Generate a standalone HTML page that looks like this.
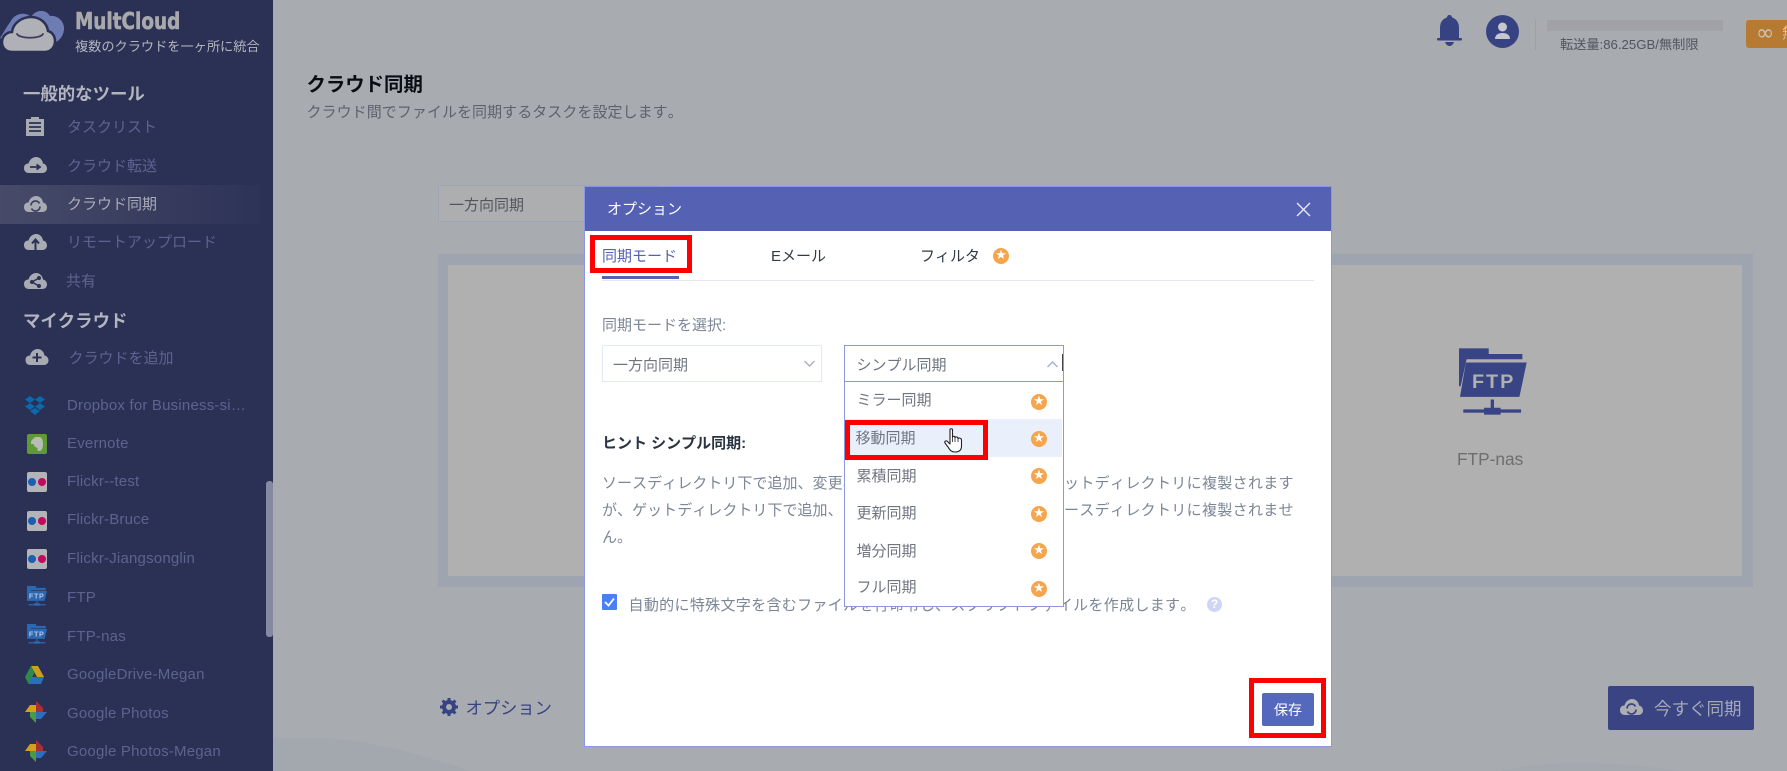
<!DOCTYPE html>
<html lang="ja">
<head>
<meta charset="utf-8">
<title>クラウド同期</title>
<style>
html,body{margin:0;padding:0;width:1787px;height:771px;overflow:hidden;background:#a8abb0;}
body{position:relative;font-family:"Liberation Sans","Noto Sans CJK JP",sans-serif;font-size:15px;font-kerning:none;}
.a{position:absolute;}
.t{position:absolute;white-space:nowrap;line-height:20px;height:20px;margin-top:-9px;}
#side{position:absolute;left:0;top:0;width:273px;height:771px;background:#2b3155;overflow:hidden;}
#side .n{color:#5c638f;}
#side .l{letter-spacing:.2px;}
#side .h{color:#b4b6bf;font-weight:bold;font-size:17.4px;}
svg{position:absolute;display:block;overflow:visible;}
.star{position:absolute;width:16px;height:16px;border-radius:50%;background:#f6a54c;}
.star:after{content:"★";position:absolute;left:0;top:0;width:16px;text-align:center;line-height:16px;color:#fff;font-size:13px;font-family:"DejaVu Sans",sans-serif;}
.red{position:absolute;border:5px solid #fe0000;box-sizing:border-box;}
.dd{color:#6f7580;}
.p{color:#7b8696;}
</style>
</head>
<body>
<!-- main background waves -->
<svg style="left:273px;top:730px" width="220" height="41"><path d="M0 9C50 5 100 8 197 41H0Z" fill="#a3a7ae"/></svg>
<svg style="left:1500px;top:755px" width="190" height="16"><path d="M0 16C50 6 100 5 180 16Z" fill="#a4a8af"/></svg>

<!-- sidebar -->
<div id="side">
  <svg style="left:0;top:8px" width="66" height="46" viewBox="0 0 66 46">
    <path d="M0 30C4 24 7 18 11 13C14 6 25 3 31 9C36 1 46 1 50 8C58 7 65 14 64 22C63 28 60 32 56 34H10Z" fill="#6e7cb4"/>
    <path d="M12 44C5 44 2 39 2 34C2 28 7 24 12 24C13 15 22 9 31 9C40 9 47 15 48 23C52 24 55 28 55 33C55 39 51 44 45 44Z" fill="#b0b1b6" stroke="#2b3155" stroke-width="2.500"/>
    <path d="M17 26C20 31 40 31 43 26" fill="none" stroke="#3a3f5c" stroke-width="1.800" stroke-linecap="round"/>
  </svg>
  <div class="t" style="left:75px;top:21px;font-size:23px;font-weight:bold;color:#a9a9ac;font-family:'DejaVu Sans',sans-serif;transform:scaleX(.8);transform-origin:left center;-webkit-text-stroke:.6px #a9a9ac">MultCloud</div>
  <div class="t" style="left:75px;top:46px;font-size:13.2px;color:#b3b5be">複数のクラウドを一ヶ所に統合</div>

  <div class="t h" style="left:23px;top:92.500px">一般的なツール</div>

  <svg style="left:26px;top:116px" width="18" height="21" viewBox="0 0 18 21"><path d="M0 3H5V1H13V3H18V20H0Z" fill="#a9abb3"/><path d="M3 7H15M3 11H15M3 15H15" stroke="#2b3155" stroke-width="1.800"/></svg>
  <div class="t n" style="left:67px;top:127px">タスクリスト</div>

  <svg style="left:24px;top:157px" width="23" height="17" viewBox="0 0 23 17"><path d="M5 16C1 16 0 13 0 11C0 8 2 6.500 4.500 6.500C5.500 2.500 9 0 12 0C16 0 18.500 3 19 6.500C21.500 7 23 9 23 11.500C23 14 21 16 18.500 16Z" fill="#a9abb3"/><path d="M6 10H15M12.500 7.500L16 10L12.500 12.500" fill="none" stroke="#2b3155" stroke-width="1.800"/></svg>
  <div class="t n" style="left:67px;top:166px">クラウド転送</div>

  <div class="a" style="left:0;top:185px;width:260px;height:39px;background:linear-gradient(90deg,#474b69,#2d3357)"></div>
  <svg style="left:24px;top:196px" width="23" height="17" viewBox="0 0 23 17"><path d="M5 16C1 16 0 13 0 11C0 8 2 6.500 4.500 6.500C5.500 2.500 9 0 12 0C16 0 18.500 3 19 6.500C21.500 7 23 9 23 11.500C23 14 21 16 18.500 16Z" fill="#a9abb3"/><path d="M7 9.500A4.500 4.500 0 0 1 15.500 7.500M16 10.500A4.500 4.500 0 0 1 7.500 12.500" fill="none" stroke="#3e4263" stroke-width="1.800"/></svg>
  <div class="t" style="left:67px;top:204px;color:#a9abb8">クラウド同期</div>

  <svg style="left:24px;top:234px" width="23" height="17" viewBox="0 0 23 17"><path d="M5 16C1 16 0 13 0 11C0 8 2 6.500 4.500 6.500C5.500 2.500 9 0 12 0C16 0 18.500 3 19 6.500C21.500 7 23 9 23 11.500C23 14 21 16 18.500 16Z" fill="#a9abb3"/><path d="M11.500 16V7M8 9.500L11.500 5.500L15 9.500" fill="none" stroke="#2b3155" stroke-width="2"/></svg>
  <div class="t n" style="left:67px;top:242px">リモートアップロード</div>

  <svg style="left:24px;top:273px" width="23" height="17" viewBox="0 0 23 17"><path d="M5 16C1 16 0 13 0 11C0 8 2 6.500 4.500 6.500C5.500 2.500 9 0 12 0C16 0 18.500 3 19 6.500C21.500 7 23 9 23 11.500C23 14 21 16 18.500 16Z" fill="#a9abb3"/><path d="M15 5L8 9L15 13" fill="none" stroke="#2b3155" stroke-width="1.500"/><circle cx="15" cy="5" r="2" fill="#2b3155"/><circle cx="8" cy="9" r="2" fill="#2b3155"/><circle cx="15" cy="13" r="2" fill="#2b3155"/></svg>
  <div class="t n" style="left:66px;top:281px">共有</div>

  <div class="t h" style="left:23px;top:319.500px">マイクラウド</div>

  <svg style="left:25px;top:349px" width="24" height="17" viewBox="0 0 23 17"><path d="M5 16C1 16 0 13 0 11C0 8 2 6.500 4.500 6.500C5.500 2.500 9 0 12 0C16 0 18.500 3 19 6.500C21.500 7 23 9 23 11.500C23 14 21 16 18.500 16Z" fill="#a9abb3"/><path d="M11.500 4V13M7 8.500H16" stroke="#2b3155" stroke-width="2"/></svg>
  <div class="t n" style="left:68.500px;top:358px">クラウドを追加</div>

  <!-- cloud list -->
  <svg style="left:25px;top:396px" width="20" height="19" viewBox="0 0 20 19"><path d="M5 0L10 3.500L5 7L0 3.500ZM15 0L20 3.500L15 7L10 3.500ZM5 7L10 10.500L5 14L0 10.500ZM15 7L20 10.500L15 14L10 10.500ZM5 15L10 12L15 15L10 19Z" fill="#0b69ad"/></svg>
  <div class="t n l" style="left:67px;top:405px">Dropbox for Business-si…</div>

  <div class="a" style="left:27px;top:434px;width:20px;height:20px;border-radius:2px;background:#5f9a37"></div>
  <svg style="left:29px;top:436px" width="16" height="16" viewBox="0 0 16 16"><path d="M3 4L6 1H10C13 1 14 4 14 8C14 12 13 15 10 15C8 15 8 13 9 12C7 12 5 10 4.500 8H2C2 6 2 5 3 4Z" fill="#b7bcb5"/></svg>
  <div class="t n l" style="left:67px;top:443px">Evernote</div>

  <div class="a" style="left:27px;top:472px;width:20px;height:20px;border-radius:2px;background:#b3b4b8"></div>
  <div class="a" style="left:28px;top:478px;width:8px;height:8px;border-radius:50%;background:#1b5fb0"></div>
  <div class="a" style="left:38px;top:478px;width:8px;height:8px;border-radius:50%;background:#c2085f"></div>
  <div class="t n l" style="left:67px;top:481px">Flickr--test</div>

  <div class="a" style="left:27px;top:511px;width:20px;height:20px;border-radius:2px;background:#b3b4b8"></div>
  <div class="a" style="left:28px;top:517px;width:8px;height:8px;border-radius:50%;background:#1b5fb0"></div>
  <div class="a" style="left:38px;top:517px;width:8px;height:8px;border-radius:50%;background:#c2085f"></div>
  <div class="t n l" style="left:67px;top:519px">Flickr-Bruce</div>

  <div class="a" style="left:27px;top:549px;width:20px;height:20px;border-radius:2px;background:#b3b4b8"></div>
  <div class="a" style="left:28px;top:555px;width:8px;height:8px;border-radius:50%;background:#1b5fb0"></div>
  <div class="a" style="left:38px;top:555px;width:8px;height:8px;border-radius:50%;background:#c2085f"></div>
  <div class="t n l" style="left:67px;top:558px">Flickr-Jiangsonglin</div>

  <svg style="left:27px;top:586px" width="20" height="20" viewBox="0 0 66 66"><path d="M0 0H30V6H62V14H14L0 50Z" fill="#2a68b3"/><path d="M7 16H66L58 49H0Z" fill="#2a68b3"/><text x="32" y="41" font-family="Liberation Sans" font-weight="bold" font-size="24" fill="#b6c4dc" text-anchor="middle" letter-spacing="2">FTP</text><path d="M33 50V58M5 62H61" stroke="#2a68b3" stroke-width="4"/><rect x="24" y="57" width="18" height="8" fill="#2a68b3"/></svg>
  <div class="t n l" style="left:67px;top:597px">FTP</div>

  <svg style="left:27px;top:624px" width="20" height="20" viewBox="0 0 66 66"><path d="M0 0H30V6H62V14H14L0 50Z" fill="#2a68b3"/><path d="M7 16H66L58 49H0Z" fill="#2a68b3"/><text x="32" y="41" font-family="Liberation Sans" font-weight="bold" font-size="24" fill="#b6c4dc" text-anchor="middle" letter-spacing="2">FTP</text><path d="M33 50V58M5 62H61" stroke="#2a68b3" stroke-width="4"/><rect x="24" y="57" width="18" height="8" fill="#2a68b3"/></svg>
  <div class="t n l" style="left:67px;top:636px">FTP-nas</div>

  <svg style="left:25px;top:666px" width="19" height="18" viewBox="0 0 19 18"><path d="M6 0H13L19 11H12Z" fill="#c9a11d"/><path d="M6 0L0 11L3.500 18L9.500 7Z" fill="#2c8a4a"/><path d="M3.500 18H16L19 11H7Z" fill="#2a6fbb"/></svg>
  <div class="t n l" style="left:67px;top:674px">GoogleDrive-Megan</div>

  <svg style="left:25px;top:701px" width="22" height="22" viewBox="0 0 22 22"><path d="M11 11V0L18 7V11Z" fill="#a9302f"/><path d="M11 11H22L16 18H11Z" fill="#2f6dbd"/><path d="M11 11V22L5 16V11Z" fill="#4d9a45"/><path d="M11 11H0L5 4H11Z" fill="#d3a019"/></svg>
  <div class="t n l" style="left:67px;top:713px">Google Photos</div>

  <svg style="left:25px;top:740px" width="22" height="22" viewBox="0 0 22 22"><path d="M11 11V0L18 7V11Z" fill="#a9302f"/><path d="M11 11H22L16 18H11Z" fill="#2f6dbd"/><path d="M11 11V22L5 16V11Z" fill="#4d9a45"/><path d="M11 11H0L5 4H11Z" fill="#d3a019"/></svg>
  <div class="t n l" style="left:67px;top:751px">Google Photos-Megan</div>

  <div class="a" style="left:266px;top:481px;width:7px;height:156px;border-radius:3px;background:#858aa1"></div>
</div>

<!-- top right -->
<svg style="left:1437px;top:15px" width="25" height="31" viewBox="0 0 25 31"><path d="M12.500 0C14 0 15 1 15 2.500C20 4 22 8 22 13V24H3V13C3 8 5 4 10 2.500C10 1 11 0 12.500 0Z" fill="#374283"/><rect x="0" y="23" width="25" height="2.500" rx="1" fill="#374283"/><path d="M8 27H17C16 30 14 31 12.500 31C11 31 9 30 8 27Z" fill="#374283"/></svg>
<div class="a" style="left:1486px;top:15px;width:33px;height:33px;border-radius:50%;background:#374283"></div>
<svg style="left:1486px;top:15px" width="33" height="33" viewBox="0 0 33 33"><circle cx="16.500" cy="12" r="4.500" fill="#c5c7cd"/><path d="M9 24C9 20 12 18 16.500 18C21 18 24 20 24 24Z" fill="#c5c7cd"/></svg>
<div class="a" style="left:1535px;top:20px;width:1px;height:30px;background:#9da0a5"></div>
<div class="a" style="left:1547px;top:20px;width:176px;height:11px;background:#a0a2a7"></div>
<div class="t" style="left:1560px;top:44px;font-size:13.2px;color:#50545c">転送量:86.25GB/無制限</div>
<div class="a" style="left:1746px;top:20px;width:41px;height:28px;background:#b67a32;border-radius:3px 0 0 3px;overflow:hidden;color:#c9c4b8">
  <div class="a" style="left:10px;top:3px;font-size:22px;line-height:22px;font-family:'DejaVu Sans',sans-serif">∞</div>
  <div class="a" style="left:36px;top:5px;font-size:15px;line-height:18px">無</div>
</div>

<!-- title -->
<div class="t" style="left:306.500px;top:83.500px;font-size:19.400px;font-weight:bold;color:#0a0e14">クラウド同期</div>
<div class="t" style="left:306.500px;top:112px;font-size:15px;color:#5d626c;letter-spacing:.05px">クラウド間でファイルを同期するタスクを設定します。</div>

<!-- behind select -->
<div class="a" style="left:438px;top:185px;width:220px;height:37px;background:#acaeb0;border:1px solid #9ea4b3;box-sizing:border-box"></div>
<div class="t" style="left:449px;top:205px;color:#52565c">一方向同期</div>

<!-- panel -->
<div class="a" style="left:438px;top:254px;width:1315px;height:333px;background:#9ea5b0"></div>
<div class="a" style="left:448px;top:265px;width:1294px;height:311px;background:#b0b0b0"></div>
<svg style="left:1459px;top:348px" width="68" height="68" viewBox="57 25 206 204"><path d="M57 25H147V42H249V58H80L62 140H57Z" fill="#384484"/><path d="M78 68H262L240 172H60Z" fill="#384484"/><text x="162" y="145" font-family="Liberation Sans" font-weight="bold" font-size="60" fill="#b0b0b0" text-anchor="middle" letter-spacing="6">FTP</text><rect x="153" y="180" width="10" height="28" fill="#384484"/><rect x="70" y="210" width="175" height="10" fill="#384484"/><rect x="133" y="205" width="50" height="21" fill="#384484"/></svg>
<div class="t" style="left:1457px;top:458px;font-size:17.300px;color:#6e6e6e;width:66px;text-align:center">FTP-nas</div>

<!-- options / sync now -->
<svg style="left:440px;top:698px" width="18" height="18" viewBox="0 0 18 18"><circle cx="9" cy="9" r="5" fill="none" stroke="#374283" stroke-width="4"/><path d="M9 0V18M0 9H18M2.600 2.600L15.400 15.400M15.400 2.600L2.600 15.400" stroke="#374283" stroke-width="3"/><circle cx="9" cy="9" r="3" fill="#a8abb0"/></svg>
<div class="t" style="left:465.500px;top:707px;font-size:17.300px;color:#374283">オプション</div>

<div class="a" style="left:1608px;top:686px;width:146px;height:44px;background:#3a4483;border-radius:2px"></div>
<svg style="left:1620px;top:699px" width="23" height="17" viewBox="0 0 23 17"><path d="M5 16C1 16 0 13 0 11C0 8 2 6.500 4.500 6.500C5.500 2.500 9 0 12 0C16 0 18.500 3 19 6.500C21.500 7 23 9 23 11.500C23 14 21 16 18.500 16Z" fill="#adaeb4"/><path d="M7 9.500A4.500 4.500 0 0 1 15.500 7.500M16 10.500A4.500 4.500 0 0 1 7.500 12.500" fill="none" stroke="#3a4483" stroke-width="1.800"/></svg>
<div class="t" style="left:1654px;top:708px;font-size:17.500px;color:#a6a9b5">今すぐ同期</div>

<!-- modal -->
<div class="a" style="left:584px;top:186px;width:748px;height:561px;background:#fff;border:1px solid #8a96e6;box-sizing:border-box"></div>
<div class="a" style="left:585px;top:187px;width:746px;height:44px;background:#5561b2"></div>
<div class="t" style="left:607px;top:208.500px;font-size:15px;color:#fff">オプション</div>
<svg style="left:1296px;top:202px" width="15" height="15" viewBox="0 0 15 15"><path d="M1 1L14 14M14 1L1 14" stroke="#e8e9f5" stroke-width="1.400"/></svg>

<div class="t" style="left:602px;top:255.500px;color:#5561b2">同期モード</div>
<div class="t" style="left:771px;top:255.500px;color:#333a45">Eメール</div>
<div class="t" style="left:920px;top:255.500px;color:#333a45">フィルタ</div>
<div class="star" style="left:993px;top:248px"></div>
<div class="a" style="left:602px;top:280px;width:712px;height:1px;background:#e4e7f2"></div>
<div class="a" style="left:602px;top:276px;width:77px;height:3px;background:#5561b2"></div>

<div class="t p" style="left:602px;top:324.500px">同期モードを選択:</div>
<div class="a" style="left:602px;top:345px;width:220px;height:37px;border:1px solid #e3e8f5;box-sizing:border-box"></div>
<div class="t dd" style="left:613px;top:365px">一方向同期</div>
<svg style="left:804px;top:360px" width="11" height="7" viewBox="0 0 11 7"><path d="M.5 1L5.500 6L10.500 1" fill="none" stroke="#aeb0b8" stroke-width="1.400"/></svg>

<!-- hint text -->
<div class="t" style="left:602px;top:443px;font-weight:bold;color:#2a3442">ヒント シンプル同期:</div>
<div class="t p" style="left:602px;top:483px;letter-spacing:.04px">ソースディレクトリ下で追加、変更、</div>
<div class="t p" style="left:1064px;top:483px;letter-spacing:.33px">ットディレクトリに複製されます</div>
<div class="t p" style="left:602px;top:510px;letter-spacing:.04px">が、ゲットディレクトリ下で追加、</div>
<div class="t p" style="left:1064px;top:510px;letter-spacing:.33px">ースディレクトリに複製されませ</div>
<div class="t p" style="left:602px;top:537px">ん。</div>

<div class="a" style="left:602px;top:594px;width:15px;height:16px;background:#4a80f5;border-radius:1px"></div>
<svg style="left:602px;top:594px" width="15" height="16" viewBox="0 0 15 16"><path d="M3 8L6.500 11.500L12 4.500" fill="none" stroke="#fff" stroke-width="1.800"/></svg>
<div class="t p" style="left:628.500px;top:605px;letter-spacing:.33px">自動的に特殊文字を含むファイルを行命令し、スクリプトファイルを作成します。</div>
<div class="a" style="left:1207px;top:597px;width:15px;height:15px;border-radius:50%;background:#cfd6f5;color:#fff;font-size:12px;line-height:15px;text-align:center;font-weight:bold">?</div>

<!-- select 2 + dropdown -->
<div class="a" style="left:844px;top:345px;width:220px;height:262px;background:#fff;border:1px solid #8b98e0;box-sizing:border-box"></div>
<div class="a" style="left:845px;top:381px;width:218px;height:1px;background:#8b98e0"></div>
<div class="t dd" style="left:856.500px;top:365px">シンプル同期</div>
<svg style="left:1047px;top:361px" width="11" height="7" viewBox="0 0 11 7"><path d="M.5 6L5.500 1L10.500 6" fill="none" stroke="#a7b0e0" stroke-width="1.500"/></svg>
<div class="a" style="left:1062px;top:354px;width:1px;height:17px;background:#444"></div>
<div class="a" style="left:845px;top:419px;width:217px;height:38px;background:#e9f0fc"></div>
<div class="t dd" style="left:856.500px;top:400px">ミラー同期</div>
<div class="t dd" style="left:855.500px;top:438px">移動同期</div>
<div class="t dd" style="left:856.500px;top:475.500px">累積同期</div>
<div class="t dd" style="left:856.500px;top:512.500px">更新同期</div>
<div class="t dd" style="left:856.500px;top:550.500px">増分同期</div>
<div class="t dd" style="left:856.500px;top:587px">フル同期</div>
<div class="star" style="left:1031px;top:394px"></div>
<div class="star" style="left:1031px;top:431px"></div>
<div class="star" style="left:1031px;top:468px"></div>
<div class="star" style="left:1031px;top:506px"></div>
<div class="star" style="left:1031px;top:543px"></div>
<div class="star" style="left:1031px;top:581px"></div>

<!-- cursor -->
<svg style="left:944px;top:428px" width="20" height="25" viewBox="0 0 20 25"><path d="M6 1.500C6 .5 8.500 .5 8.500 1.500V9C9 8 11 8 11 9.500C12 8.500 14 8.800 14 10.500C15 9.800 17.500 10 17.500 12V18C17.500 22 15 24 11 24C7 24 6 22 4 19L1 15C0 13.500 2 12 3.500 13.500L6 16Z" fill="#fff" stroke="#222" stroke-width="1.100" stroke-linejoin="round"/><path d="M8.500 9V14M11 9.500V14M14 10.500V14" stroke="#222" stroke-width=".8"/></svg>

<!-- save -->
<div class="a" style="left:1262px;top:693px;width:52px;height:33px;background:#5468bd;border-radius:2px;color:#fff;font-size:14px;line-height:34px;text-align:center">保存</div>

<!-- red boxes -->
<div class="red" style="left:590px;top:235px;width:102px;height:38px"></div>
<div class="red" style="left:845px;top:420px;width:143px;height:40px"></div>
<div class="red" style="left:1249px;top:678px;width:77px;height:60px"></div>
</body>
</html>
